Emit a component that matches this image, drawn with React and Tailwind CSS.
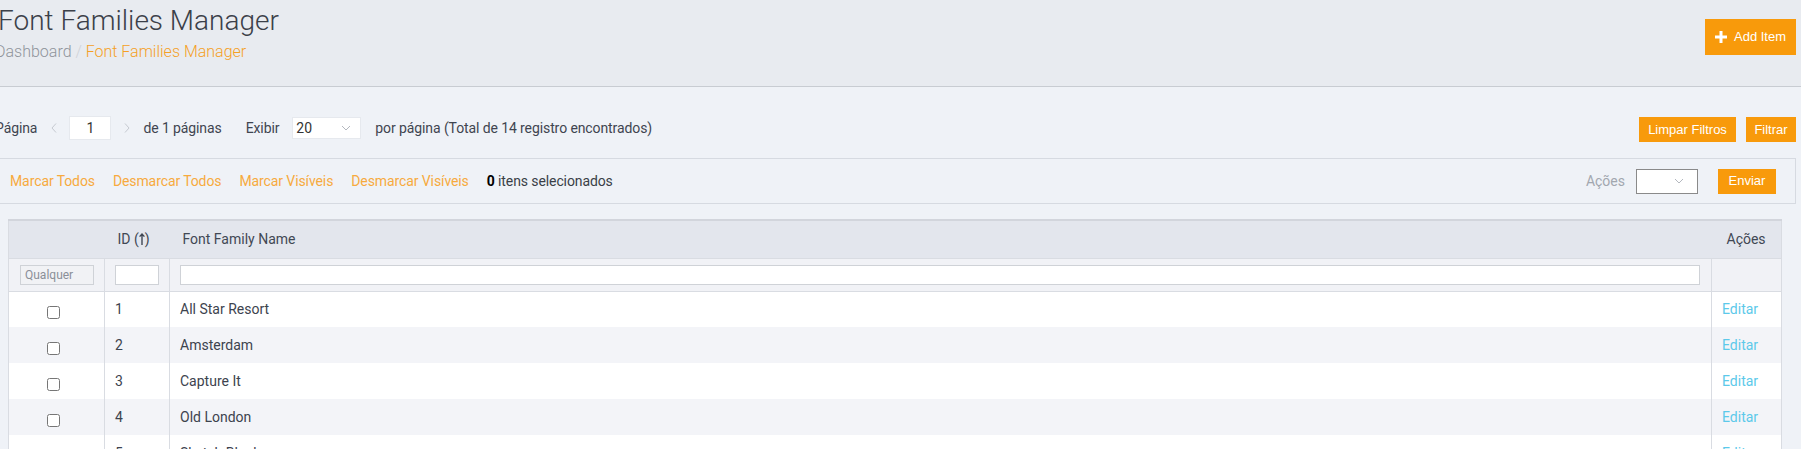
import React from "react";

const rows = [
  { id: 1, name: "All Star Resort" },
  { id: 2, name: "Amsterdam" },
  { id: 3, name: "Capture It" },
  { id: 4, name: "Old London" },
  { id: 5, name: "Sketch Block" },
  { id: 6, name: "Bebas Neue" },
  { id: 7, name: "Lobster" },
];

function Chevron({ dir = "left" }) {
  return (
    <svg width="8" height="12" viewBox="0 0 8 12" className="shrink-0">
      <path
        d={dir === "left" ? "M6 1.5 L2 6 L6 10.5" : "M2 1.5 L6 6 L2 10.5"}
        fill="none"
        stroke="#c6cad1"
        strokeWidth="1"
      />
    </svg>
  );
}

function Caret() {
  return (
    <svg width="10" height="6" viewBox="0 0 10 6">
      <path d="M1 1 L5 5 L9 1" fill="none" stroke="#b4b8bf" strokeWidth="1" />
    </svg>
  );
}

export default function App() {
  return (
    <div className="h-screen overflow-hidden bg-[#eff2f7] font-['Roboto',sans-serif] text-[14px] text-[#3d434e]">
      {/* Header */}
      <header className="h-[87px] bg-[#e8ebf0] border-b border-[#c8ccd2] flex justify-between pr-[5px]">
        <div className="-ml-[2px] pt-[4px]">
          <h1 className="text-[28px] leading-[34px] font-light text-[#3b4049]">
            Font Families Manager
          </h1>
          <div className="mt-[4px] -ml-[3px] text-[16px] leading-[20px] font-light">
            <span className="text-[#8f949b]">Dashboard</span>
            <span className="text-[#cfd2d7]"> / </span>
            <span className="text-[#f5a025]">Font Families Manager</span>
          </div>
        </div>
        <button className="mt-[19px] h-[36px] w-[91px] bg-[#f89a0b] text-white font-['Liberation_Sans',sans-serif] text-[13px] flex items-center justify-center gap-[7px]">
          <svg width="12" height="12" viewBox="0 0 12 12">
            <path d="M6 0 V12 M0 6 H12" stroke="#fff" strokeWidth="3" />
          </svg>
          Add Item
        </button>
      </header>

      {/* Pagination */}
      <div className="pt-[27px] flex justify-between items-start pr-[5px]">
        <div className="-ml-[5px] mt-[2px] h-[24px] flex items-center text-[#3f4550] tracking-[-0.1px]">
          <span>Página</span>
          <span className="ml-[13px]">
            <Chevron dir="left" />
          </span>
          <div className="ml-[11px] w-[42px] h-[24px] bg-white border border-[#e6e9ee] flex items-center justify-center text-[#333]">
            1
          </div>
          <span className="ml-[12px]">
            <Chevron dir="right" />
          </span>
          <span className="ml-[12px]">de 1 páginas</span>
          <span className="ml-[24px]">Exibir</span>
          <div className="ml-[13px] w-[69px] h-[22px] bg-white border border-[#e6e9ee] flex items-center justify-between pl-[3px] pr-[9px] text-[#333]">
            20
            <Caret />
          </div>
          <span className="ml-[14px]">por página (Total de 14 registro encontrados)</span>
        </div>
        <div className="mt-[3px] flex gap-[10px] font-['Liberation_Sans',sans-serif] text-[13px] text-white">
          <button className="h-[25px] w-[97px] bg-[#f89a0b]">Limpar Filtros</button>
          <button className="h-[25px] w-[50px] bg-[#f89a0b]">Filtrar</button>
        </div>
      </div>

      {/* Bulk actions */}
      <div className="mt-[16px] -ml-[3px] mr-[5px] h-[46px] border border-[#d6dae1] bg-[#eff2f7] flex items-center justify-between pl-[12px] pr-[19px]">
        <div className="flex items-center gap-[18px] tracking-[-0.1px]">
          <span className="text-[#f7aa3e]">Marcar Todos</span>
          <span className="text-[#f7aa3e]">Desmarcar Todos</span>
          <span className="text-[#f7aa3e]">Marcar Visíveis</span>
          <span className="text-[#f7aa3e]">Desmarcar Visíveis</span>
          <span className="text-[#3a3f47]">
            <b className="text-black">0</b> itens selecionados
          </span>
        </div>
        <div className="flex items-center">
          <span className="text-[#a2a7af]">Ações</span>
          <div className="ml-[11px] w-[62px] h-[25px] bg-white border border-[#8a8a8a] flex items-center justify-end pr-[13px]">
            <Caret />
          </div>
          <button className="ml-[20px] h-[25px] w-[58px] bg-[#f89a0b] text-white font-['Liberation_Sans',sans-serif] text-[13px]">
            Enviar
          </button>
        </div>
      </div>

      {/* Table */}
      <div className="mt-[15px] pl-[8px] pr-[19px]">
        <table className="w-full table-fixed border-collapse border-x border-[#d9dce2]">
          <colgroup>
            <col className="w-[96px]" />
            <col className="w-[65px]" />
            <col />
            <col className="w-[70px]" />
          </colgroup>
          <thead>
            <tr className="h-[38px] bg-[#e3e6ed] border-t-2 border-[#d2d5dc] text-left text-[#414854]">
              <th className="font-normal"></th>
              <th className="font-normal pl-[13px] whitespace-nowrap">
                ID (
                <svg width="6" height="12" viewBox="0 0 6 12" className="inline-block align-[-1px]">
                  <path d="M3 1 V12 M0.6 3.6 L3 1 L5.4 3.6" fill="none" stroke="#414854" strokeWidth="1.4" />
                </svg>
                )
              </th>
              <th className="font-normal pl-[13px]">Font Family Name</th>
              <th className="font-normal pl-[15px]">Ações</th>
            </tr>
            <tr className="h-[33px] bg-[#f1f2f6] border-t border-b border-[#d9dce2]">
              <td className="border-r border-[#d9dce2] pl-[11px]">
                <div className="w-[74px] h-[20px] border border-[#cfd2d7] bg-[#f1f2f5] text-[12px] text-[#8a8f98] flex items-center pl-[4px]">
                  Qualquer
                </div>
              </td>
              <td className="border-r border-[#d9dce2] pl-[10px]">
                <div className="w-[44px] h-[20px] border border-[#cfd2d7] bg-white"></div>
              </td>
              <td className="border-r border-[#d9dce2] pl-[10px] pr-[11px]">
                <div className="w-full h-[20px] border border-[#cfd2d7] bg-white"></div>
              </td>
              <td></td>
            </tr>
          </thead>
          <tbody>
            {rows.map((r, i) => (
              <tr key={r.id} className={`h-[36px] ${i % 2 === 1 ? "bg-[#f3f4f8]" : "bg-white"}`}>
                <td className="border-r border-[#d9dce2] pl-[38px]">
                  <input type="checkbox" className="block w-[13px] h-[13px] m-0 mt-[7px]" />
                </td>
                <td className="border-r border-[#d9dce2] pl-[10px]">{r.id}</td>
                <td className="border-r border-[#d9dce2] pl-[10px]">{r.name}</td>
                <td className="pl-[10px] text-[#5cc9ea]">Editar</td>
              </tr>
            ))}
          </tbody>
        </table>
      </div>
    </div>
  );
}
